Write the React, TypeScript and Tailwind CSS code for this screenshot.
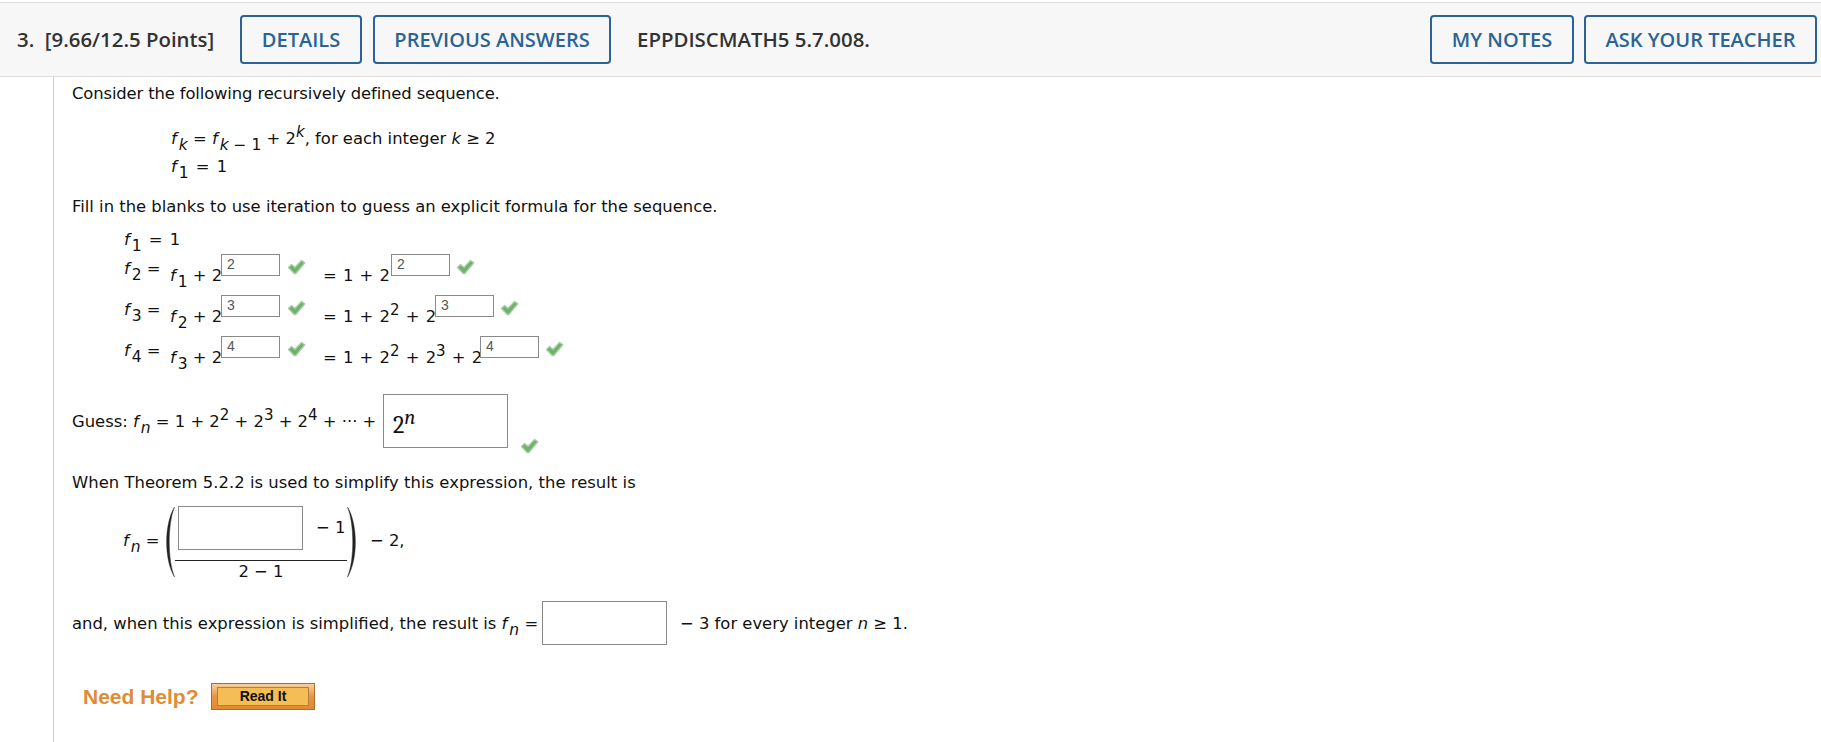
import React from 'react';

const mathFont = "font-['DejaVu_Sans',sans-serif]";

const Check: React.FC<{ className?: string }> = ({ className }) => (
  <svg className={className} width="19" height="16" viewBox="0 0 19 16">
    <path d="M1.5 8.5 L4.5 5.5 L8 8.5 L14.5 1.5 L17.8 3.8 L8.8 14.5 L7.2 14.5 Z" fill="#6fb06c" stroke="#a5cfa2" strokeWidth="1.4" strokeLinejoin="round" />
  </svg>
);

// italic f with a subscript
const F: React.FC<{ sub: React.ReactNode }> = ({ sub }) => (
  <span className="whitespace-nowrap">
    <i>f</i>
    <sub className="top-[6px] ml-[2px] text-[15.5px]">{sub}</sub>
  </span>
);

const Pow: React.FC<{ n: React.ReactNode }> = ({ n }) => (
  <sup className="text-[15px] -top-[7px]">{n}</sup>
);

const SupBox: React.FC<{ value: string }> = ({ value }) => (
  <span className="flex h-[22px] w-[59px] items-start border border-[#8a8a8a] bg-white pl-[5px] font-['Liberation_Sans',sans-serif] text-[14px] leading-[19px] text-[#555]">
    {value}
  </span>
);

type IterRow = {
  lhs: string;
  rhs: string;
  value: string;
  sum: React.ReactNode;
  sumWidth: string;
};

const iterRows: IterRow[] = [
  { lhs: '2', rhs: '1', value: '2', sum: <>= 1 + 2</>, sumWidth: 'w-[68px]' },
  { lhs: '3', rhs: '2', value: '3', sum: <>= 1 + 2<Pow n="2" /> + 2</>, sumWidth: 'w-[112px]' },
  { lhs: '4', rhs: '3', value: '4', sum: <>= 1 + 2<Pow n="2" /> + 2<Pow n="3" /> + 2</>, sumWidth: 'w-[157px]' },
];

const App: React.FC = () => {
  const headBtn = "flex h-[49px] items-center justify-center rounded-[4px] border-2 border-[#2a6496] text-[20px] font-semibold text-[#2a6496]";

  return (
    <div className={`h-[742px] overflow-hidden bg-white pt-[2px] text-[16.4px] text-[#111] ${mathFont}`}>
      <header className="flex h-[75px] items-center justify-between border-y border-[#dedede] bg-[#f7f7f7] pl-[17px] pr-[4px] font-['Open_Sans',sans-serif]">
        <div className="flex items-center">
          <span className="w-[223px] whitespace-pre text-[20.4px] font-semibold text-[#333]">3.  [9.66/12.5 Points]</span>
          <button className={`${headBtn} w-[122px]`}>DETAILS</button>
          <button className={`${headBtn} ml-[11px] w-[238px]`}>PREVIOUS ANSWERS</button>
          <span className="ml-[26px] text-[20.4px] font-semibold text-[#333]">EPPDISCMATH5 5.7.008.</span>
        </div>
        <div className="flex items-center gap-[10px]">
          <button className={`${headBtn} w-[144px]`}>MY NOTES</button>
          <button className={`${headBtn} w-[233px]`}>ASK YOUR TEACHER</button>
        </div>
      </header>

      <main className="ml-[53px] h-[665px] border-l border-[#cfcfcf] pl-[18px]">
        <p className="pt-[6px] leading-[22px] tracking-[-0.13px]">Consider the following recursively defined sequence.</p>

        <div className="ml-[99px] mt-[20px] leading-[28px]">
          <div className="h-[28px]">
            <F sub={<i>k</i>} /> = <F sub={<><i>k</i> − 1</>} /> + 2<Pow n={<i>k</i>} />, for each integer <i>k</i> ≥ 2
          </div>
          <div className="h-[28px] [word-spacing:2px]"><F sub="1" /> = 1</div>
        </div>

        <p className="mt-[15px] leading-[22px]">Fill in the blanks to use iteration to guess an explicit formula for the sequence.</p>

        <div className="ml-[52px] mt-[8px]">
          <div className="h-[28px] leading-[28px] [word-spacing:2px]"><F sub="1" /> = 1</div>
          {iterRows.map((row) => (
            <div key={row.lhs} className="flex h-[41px] items-start">
              <span className="mt-[1px] w-[46px] whitespace-nowrap leading-[28px]"><F sub={row.lhs} /> =</span>
              <span className="mt-[8px] w-[51px] whitespace-nowrap leading-[28px]"><F sub={row.rhs} /> + 2</span>
              <SupBox value={row.value} />
              <Check className="ml-[7px] mt-[5px]" />
              <span className={`ml-[17px] mt-[8px] ${row.sumWidth} whitespace-nowrap leading-[28px] [word-spacing:1px]`}>{row.sum}</span>
              <SupBox value={row.value} />
              <Check className="ml-[6px] mt-[5px]" />
            </div>
          ))}
        </div>

        <div className="mt-[17px] flex items-start">
          <span className="mt-[14px] w-[311px] whitespace-nowrap leading-[28px]">
            Guess: <F sub={<i>n</i>} /> = 1 + 2<Pow n="2" /> + 2<Pow n="3" /> + 2<Pow n="4" /> + ··· +
          </span>
          <span className="flex h-[54px] w-[125px] border border-[#8a8a8a] pl-[9px] pt-[16px] font-serif text-[24px] leading-[28px]">
            <span>2</span>
            <span className="-mt-[8px] text-[21px] italic">n</span>
          </span>
          <Check className="ml-[12px] mt-[44px]" />
        </div>

        <p className="mt-[18px] leading-[22px] tracking-[0.03px]">When Theorem 5.2.2 is used to simplify this expression, the result is</p>

        <div className="ml-[51px] mt-[12px] flex items-start">
          <span className="mt-[21px] w-[40px] whitespace-nowrap leading-[28px]"><F sub={<i>n</i>} /> =</span>
          <svg width="12" height="72" viewBox="0 0 12 72" className="shrink-0">
            <path d="M11.5 1 C 1 18, 1 54, 11.5 71 C 4.5 54, 4.5 18, 11.5 1 Z" fill="#222" stroke="#222" strokeWidth="0.4" />
          </svg>
          <div className="w-[172px]">
            <div className="flex h-[55px] items-start border-b border-[#222] pl-[3px]">
              <span className="h-[44px] w-[125px] border border-[#8a8a8a]" />
              <span className="ml-[13px] mt-[10px] whitespace-nowrap leading-[24px]">− 1</span>
            </div>
            <div className="text-center leading-[22px]">2 − 1</div>
          </div>
          <svg width="12" height="72" viewBox="0 0 12 72" className="shrink-0">
            <path d="M0.5 1 C 11 18, 11 54, 0.5 71 C 7.5 54, 7.5 18, 0.5 1 Z" fill="#222" stroke="#222" strokeWidth="0.4" />
          </svg>
          <span className="ml-[11px] mt-[21px] leading-[28px]">− 2,</span>
        </div>

        <div className="mt-[18px] flex items-start">
          <span className="mt-[9px] w-[470px] whitespace-nowrap leading-[28px]">
            and, when this expression is simplified, the result is <F sub={<i>n</i>} /> =
          </span>
          <span className="h-[44px] w-[125px] border border-[#8a8a8a]" />
          <span className="ml-[13px] mt-[9px] whitespace-nowrap leading-[28px]">− 3 for every integer <i>n</i> ≥ 1.</span>
        </div>

        <div className="ml-[11px] mt-[36px] flex items-center">
          <span className="w-[128px] font-['Liberation_Sans',sans-serif] text-[21px] font-bold text-[#e08b35]">Need Help?</span>
          <button className="h-[27px] w-[104px] border border-[#a8702e] bg-linear-to-b from-[#f7cf9f] via-[#e9953f] to-[#e08a35] px-[5px] py-[3px]">
            <span className="flex h-full items-center justify-center border border-[#b08040] bg-[#f4bd55] font-['Liberation_Sans',sans-serif] text-[14px] font-bold text-[#111]">Read It</span>
          </button>
        </div>
      </main>
    </div>
  );
};

export default App;
